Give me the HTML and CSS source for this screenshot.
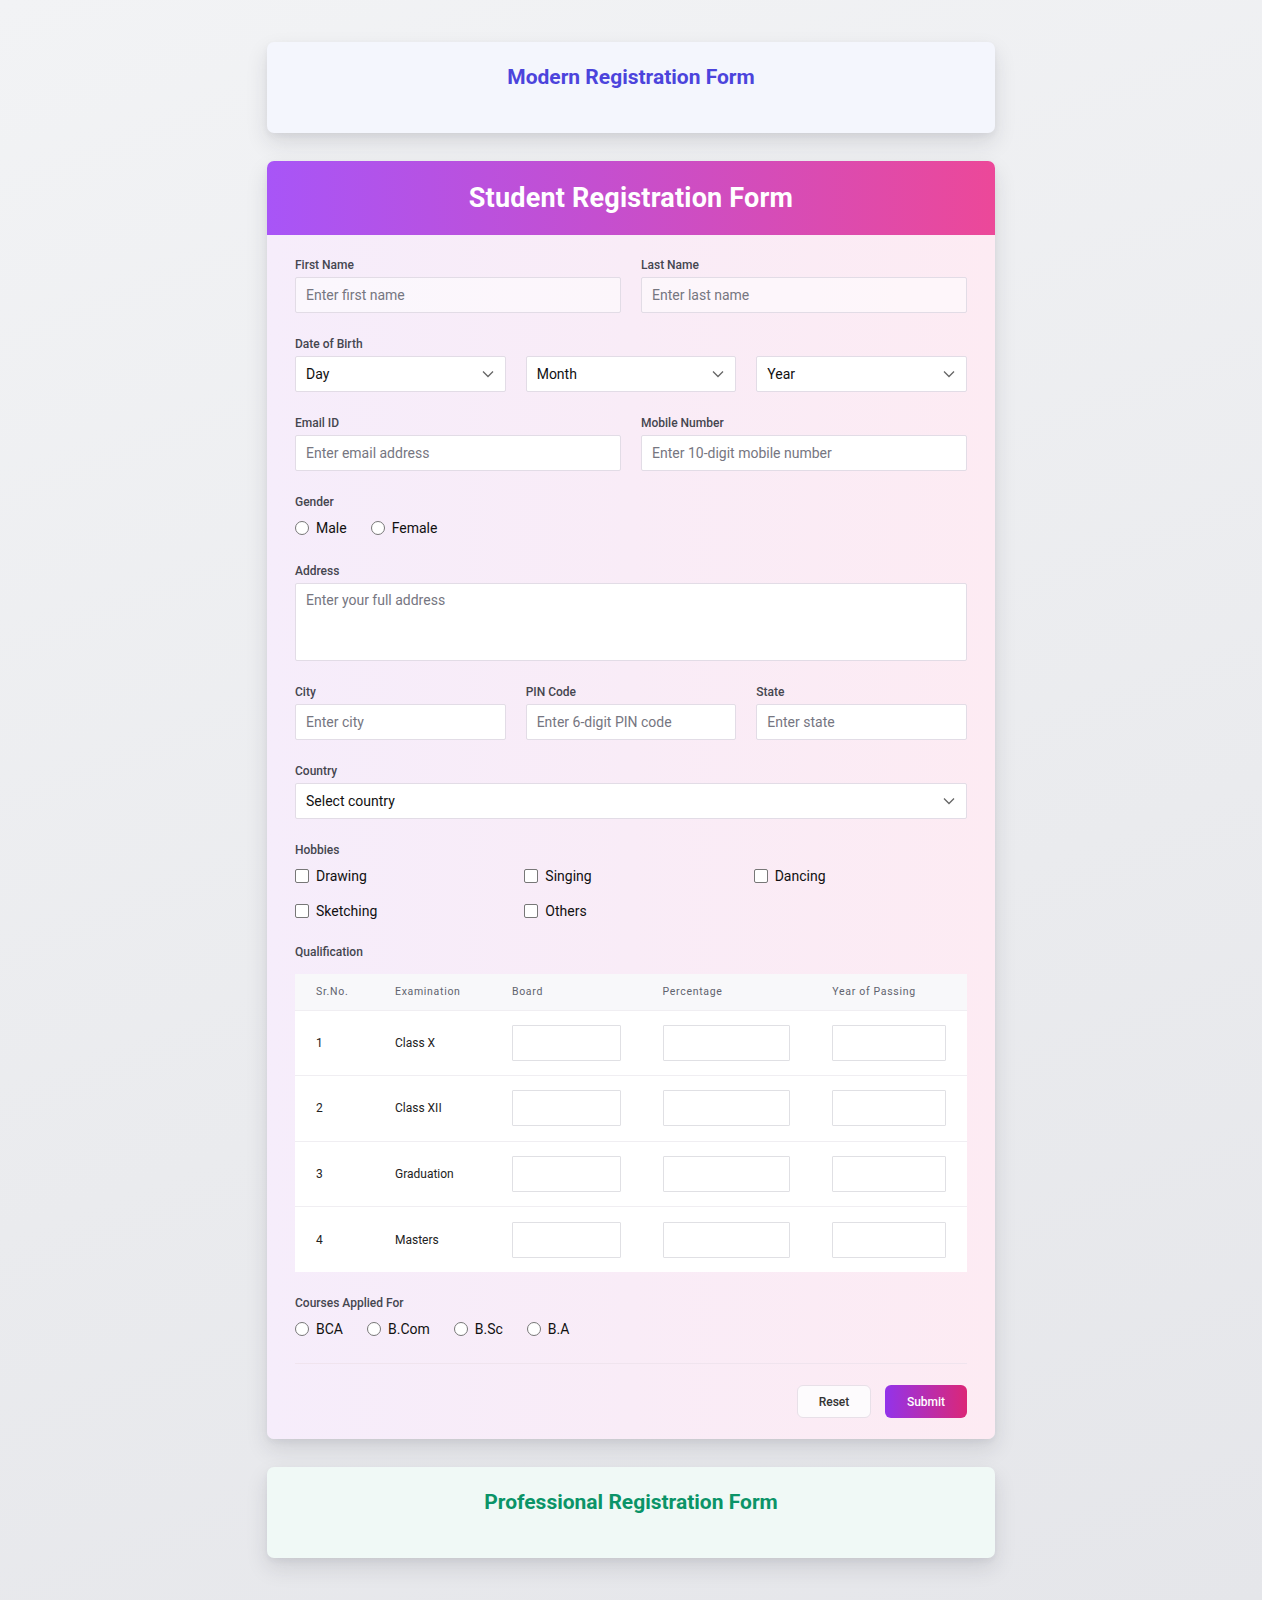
FILE: index.html
```html
<!DOCTYPE html>
<html lang="en">
<head>
<meta charset="utf-8">
<title>Registration Forms</title>
<link rel="stylesheet" href="styles.css">
</head>
<body>
<main class="page">
  <section class="card card-modern">
    <h2 class="card-title title-modern">Modern Registration Form</h2>
  </section>

  <section class="card card-student">
    <header class="student-header">
      <h1>Student Registration Form</h1>
    </header>
    <form class="student-body">
      <div class="grid2 group">
        <div>
          <label class="lbl">First Name</label>
          <input class="field field-soft" type="text" placeholder="Enter first name">
        </div>
        <div>
          <label class="lbl">Last Name</label>
          <input class="field field-soft" type="text" placeholder="Enter last name">
        </div>
      </div>

      <div class="group">
        <label class="lbl">Date of Birth</label>
        <div class="grid3">
          <div class="select-wrap">
            <select class="field select"><option>Day</option></select>
            <svg class="chev" width="12" height="8" viewBox="0 0 12 8"><path d="M1 1.5l5 5 5-5" fill="none" stroke="#666" stroke-width="1.3"/></svg>
          </div>
          <div class="select-wrap">
            <select class="field select"><option>Month</option></select>
            <svg class="chev" width="12" height="8" viewBox="0 0 12 8"><path d="M1 1.5l5 5 5-5" fill="none" stroke="#666" stroke-width="1.3"/></svg>
          </div>
          <div class="select-wrap">
            <select class="field select"><option>Year</option></select>
            <svg class="chev" width="12" height="8" viewBox="0 0 12 8"><path d="M1 1.5l5 5 5-5" fill="none" stroke="#666" stroke-width="1.3"/></svg>
          </div>
        </div>
      </div>

      <div class="grid2 group">
        <div>
          <label class="lbl">Email ID</label>
          <input class="field" type="text" placeholder="Enter email address">
        </div>
        <div>
          <label class="lbl">Mobile Number</label>
          <input class="field" type="text" placeholder="Enter 10-digit mobile number">
        </div>
      </div>

      <div class="group group-gender">
        <label class="lbl">Gender</label>
        <div class="options">
          <label class="opt"><input type="radio" name="g" class="radio">Male</label>
          <label class="opt"><input type="radio" name="g" class="radio">Female</label>
        </div>
      </div>

      <div class="group">
        <label class="lbl">Address</label>
        <textarea class="field area" placeholder="Enter your full address"></textarea>
      </div>

      <div class="grid3 group">
        <div>
          <label class="lbl">City</label>
          <input class="field" type="text" placeholder="Enter city">
        </div>
        <div>
          <label class="lbl">PIN Code</label>
          <input class="field" type="text" placeholder="Enter 6-digit PIN code">
        </div>
        <div>
          <label class="lbl">State</label>
          <input class="field" type="text" placeholder="Enter state">
        </div>
      </div>

      <div class="group">
        <label class="lbl">Country</label>
        <div class="select-wrap">
          <select class="field select"><option>Select country</option></select>
          <svg class="chev" width="12" height="8" viewBox="0 0 12 8"><path d="M1 1.5l5 5 5-5" fill="none" stroke="#666" stroke-width="1.3"/></svg>
        </div>
      </div>

      <div class="group group-hobbies">
        <label class="lbl">Hobbies</label>
        <div class="hobbies">
          <label class="opt"><input type="checkbox" class="check">Drawing</label>
          <label class="opt"><input type="checkbox" class="check">Singing</label>
          <label class="opt"><input type="checkbox" class="check">Dancing</label>
          <label class="opt"><input type="checkbox" class="check">Sketching</label>
          <label class="opt"><input type="checkbox" class="check">Others</label>
        </div>
      </div>

      <div class="group">
        <label class="lbl lbl-q">Qualification</label>
        <table class="qtable">
          <colgroup>
            <col class="c1"><col class="c2"><col class="c3"><col class="c4"><col class="c5">
          </colgroup>
          <thead>
            <tr><th>Sr.No.</th><th>Examination</th><th>Board</th><th>Percentage</th><th>Year of Passing</th></tr>
          </thead>
          <tbody>
            <tr><td>1</td><td>Class X</td><td><input class="cell"></td><td><input class="cell"></td><td><input class="cell"></td></tr>
            <tr><td>2</td><td>Class XII</td><td><input class="cell"></td><td><input class="cell"></td><td><input class="cell"></td></tr>
            <tr><td>3</td><td>Graduation</td><td><input class="cell"></td><td><input class="cell"></td><td><input class="cell"></td></tr>
            <tr><td>4</td><td>Masters</td><td><input class="cell"></td><td><input class="cell"></td><td><input class="cell"></td></tr>
          </tbody>
        </table>
      </div>

      <div class="group group-last">
        <label class="lbl">Courses Applied For</label>
        <div class="options">
          <label class="opt"><input type="radio" name="c" class="radio">BCA</label>
          <label class="opt"><input type="radio" name="c" class="radio">B.Com</label>
          <label class="opt"><input type="radio" name="c" class="radio">B.Sc</label>
          <label class="opt"><input type="radio" name="c" class="radio">B.A</label>
        </div>
      </div>

      <div class="actions">
        <button type="button" class="btn btn-reset">Reset</button>
        <button type="button" class="btn btn-submit">Submit</button>
      </div>
    </form>
  </section>

  <section class="card card-pro">
    <h2 class="card-title title-pro">Professional Registration Form</h2>
  </section>
</main>
</body>
</html>
```

FILE: styles.css
```css
* { box-sizing: border-box; }

html, body {
  margin: 0;
  padding: 0;
}

body {
  min-height: 1600px;
  font-family: Roboto, "Liberation Sans", Arial, sans-serif;
  background: linear-gradient(160deg, #f2f3f5 0%, #eaebee 60%, #e5e6ea 100%);
  color: #1f2937;
}

.page {
  width: 728px;
  margin: 0 auto;
  padding-top: 42px;
  display: flex;
  flex-direction: column;
  gap: 28px;
}

.card {
  border-radius: 7px;
  box-shadow: 0 10px 22px rgba(30, 30, 50, 0.12), 0 3px 6px rgba(30, 30, 50, 0.05);
}

.card-modern {
  background: #f4f6fd;
  padding: 23px 24px 44px;
}

.card-pro {
  background: #f0f9f6;
  padding: 23px 24px 44px;
}

.card-title {
  margin: 0;
  text-align: center;
  font-size: 21px;
  line-height: 24px;
  font-weight: 700;
}

.title-modern { color: #4c44dc; }
.title-pro { color: #0b9468; }

.card-student {
  overflow: hidden;
  background: linear-gradient(90deg, #f6edfb 0%, #f9ecf7 50%, #fdebf3 100%);
}

.student-header {
  height: 74px;
  display: flex;
  align-items: center;
  justify-content: center;
  background: linear-gradient(90deg, #a855f7 0%, #c44fd0 45%, #ec4899 100%);
}

.student-header h1 {
  margin: 0;
  color: #fff;
  font-size: 27px;
  font-weight: 700;
  letter-spacing: 0.2px;
}

.student-body {
  padding: 22px 28px 21px;
}

.group {
  margin-bottom: 23px;
}

.group-gender { margin-bottom: 24px; }
.group-hobbies { margin-bottom: 22px; }
.group-last { margin-bottom: 0; }

.grid2 {
  display: grid;
  grid-template-columns: 1fr 1fr;
  gap: 20px;
}

.grid3 {
  display: grid;
  grid-template-columns: 1fr 1fr 1fr;
  gap: 20px;
}

.lbl {
  display: block;
  font-size: 12px;
  line-height: 16px;
  font-weight: 500;
  color: #45464f;
  margin-bottom: 4px;
}

.lbl-q { margin-bottom: 14px; }

.field {
  display: block;
  width: 100%;
  height: 36px;
  padding: 0 10px;
  border: 1px solid #e2dce6;
  border-radius: 2px;
  background: #fff;
  font-family: Roboto, "Liberation Sans", Arial, sans-serif;
  font-size: 14px;
  color: #111;
  outline: none;
}

.field-soft { background: rgba(255, 255, 255, 0.55); }

.field::placeholder { color: #767681; }

.area {
  height: 78px;
  padding: 8px 10px;
  resize: none;
  line-height: 17px;
}

.select-wrap {
  position: relative;
}

.select {
  appearance: none;
  -webkit-appearance: none;
  color: #111;
}

.chev {
  position: absolute;
  right: 12px;
  top: 14px;
  pointer-events: none;
}

.options {
  display: flex;
  gap: 24px;
  padding-top: 3px;
}

.opt {
  display: flex;
  align-items: center;
  gap: 7px;
  height: 22px;
  font-size: 14px;
  color: #111;
}

.radio {
  appearance: none;
  -webkit-appearance: none;
  width: 14px;
  height: 14px;
  margin: 0;
  border: 1px solid #777;
  border-radius: 50%;
  background: #fff;
}

.check {
  appearance: none;
  -webkit-appearance: none;
  width: 14px;
  height: 14px;
  margin: 0;
  border: 1px solid #777;
  border-radius: 2px;
  background: #fff;
}

.hobbies {
  display: grid;
  grid-template-columns: 1fr 1fr 1fr;
  column-gap: 16px;
  row-gap: 13px;
  padding-top: 3px;
}

.qtable {
  width: 100%;
  border-collapse: collapse;
  background: #fff;
}

.c1 { width: 79px; }
.c2 { width: 117px; }
.c3 { width: 151px; }
.c4 { width: 170px; }
.c5 { width: 156px; }

.qtable th {
  background: #f8f8fa;
  text-align: left;
  font-size: 10.5px;
  font-weight: 400;
  letter-spacing: 0.7px;
  color: #5f636e;
  padding: 0 21px;
  height: 36px;
}

.qtable td {
  padding: 14px 21px;
  font-size: 12px;
  font-weight: 400;
  color: #222;
  border-top: 1px solid #f0eef2;
  height: 65.5px;
}

.cell {
  display: block;
  width: 100%;
  height: 36px;
  border: 1px solid #e0e0e4;
  border-radius: 1px;
  background: #fff;
  outline: none;
}

.actions {
  margin-top: 23px;
  border-top: 1px solid #f0e4ee;
  padding-top: 21px;
  display: flex;
  justify-content: flex-end;
  gap: 14px;
}

.btn {
  height: 33px;
  border-radius: 6px;
  font-family: Roboto, "Liberation Sans", Arial, sans-serif;
  font-size: 12px;
  font-weight: 500;
  cursor: pointer;
}

.btn-reset {
  width: 74px;
  background: #fdfbfd;
  border: 1px solid #e8e0e8;
  color: #333;
}

.btn-submit {
  width: 82px;
  border: none;
  color: #fff;
  background: linear-gradient(90deg, #9333ea 0%, #db2777 100%);
}
```
